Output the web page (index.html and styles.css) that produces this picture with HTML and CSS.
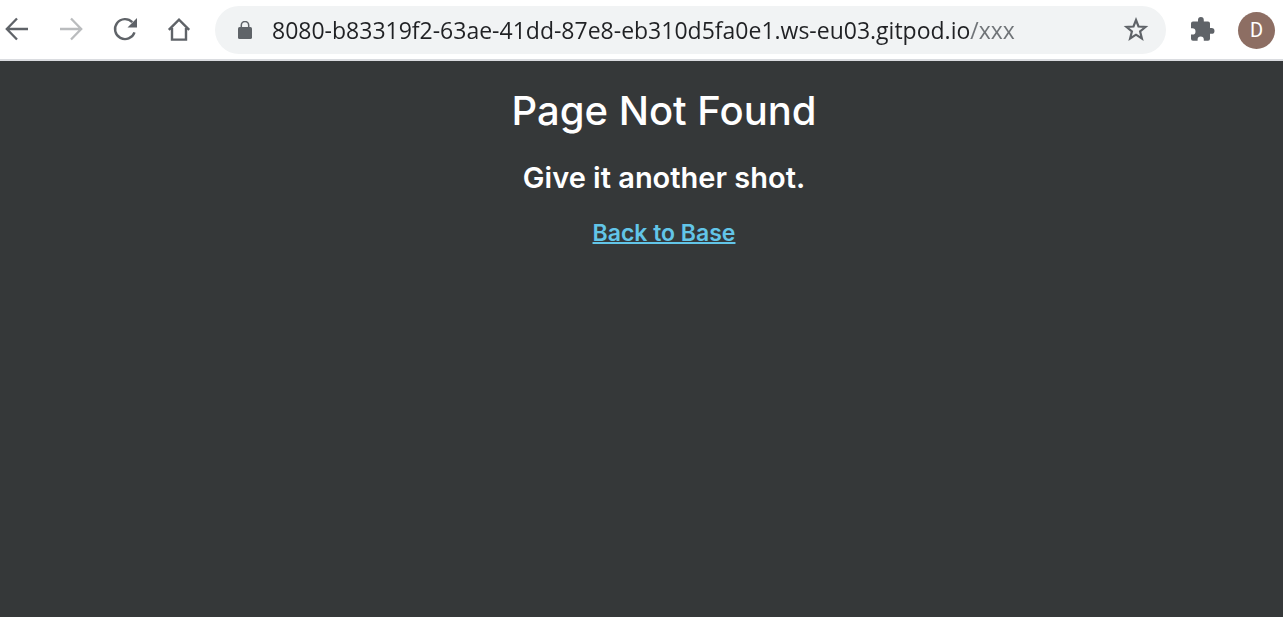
FILE: index.html
```html
<!DOCTYPE html>
<html lang="en">
<head>
<meta charset="utf-8">
<meta name="viewport" content="width=device-width, initial-scale=1">
<title>Page Not Found</title>
<link rel="stylesheet" href="styles.css">
</head>
<body>
<header class="toolbar">
  <nav class="nav-buttons" aria-label="Browser">
    <button class="icon-button" type="button" aria-label="Back">
      <svg viewBox="0 0 24 24"><path d="M23 12H2.500M12 1.500 1.800 12 12 22.500" fill="none" stroke="currentColor" stroke-width="2.300"/></svg>
    </button>
    <button class="icon-button icon-button-muted" type="button" aria-label="Forward">
      <svg viewBox="0 0 24 24"><path d="M1 12h20.500M12 1.500 22.200 12 12 22.500" fill="none" stroke="currentColor" stroke-width="2.300"/></svg>
    </button>
    <button class="icon-button" type="button" aria-label="Reload">
      <svg viewBox="0 0 24 24"><path d="M21.500 15.400A10 10 0 1 1 19.300 5.200" fill="none" stroke="currentColor" stroke-width="2.400"/><path d="M24 1v9.500h-9.500z" fill="currentColor"/></svg>
    </button>
    <button class="icon-button" type="button" aria-label="Home">
      <svg viewBox="0 0 24 24"><path d="M1.800 12.900 12 2.700l10.200 10.200M5 11v11.600h14V11" fill="none" stroke="currentColor" stroke-width="2.400"/></svg>
    </button>
  </nav>
  <form class="address">
    <svg class="lock" viewBox="0 0 14 18"><rect y="6" width="14" height="12" rx="1.600" fill="currentColor"/><path d="M3.300 7V4.200a3.700 3.700 0 0 1 7.400 0V7" fill="none" stroke="currentColor" stroke-width="1.500"/></svg>
    <input class="address-input" type="text" aria-label="Address" spellcheck="false" value="8080-b83319f2-63ae-41dd-87e8-eb310d5fa0e1.ws-eu03.gitpod.io/xxx">
    <button class="icon-button" type="button" aria-label="Bookmark">
      <svg viewBox="0 0 24 24"><path d="M12 3 14.500 9.500l7 .5-5.400 4.500 1.800 7-5.900-3.800-5.900 3.800 1.800-7L2.500 10l7-.5z" fill="none" stroke="currentColor" stroke-width="2.200"/></svg>
    </button>
  </form>
  <button class="icon-button" type="button" aria-label="Extensions">
    <svg viewBox="0 0 24 24"><path d="M3 4.600H8V3a2.900 2.900 0 0 1 5.800 0v1.600H18a2 2 0 0 1 2 2V11h1.600a2.900 2.900 0 0 1 0 5.800H20v5a2 2 0 0 1-2 2h-4.200v-1.300a3.100 3.100 0 0 0-6.200 0v1.300H3a2 2 0 0 1-2-2v-4.200h1.300a3.200 3.200 0 0 0 0-6.400H1V6.600a2 2 0 0 1 2-2z" fill="currentColor"/></svg>
  </button>
  <button class="avatar" type="button" aria-label="Profile D">D</button>
</header>
<main class="page">
  <h1 class="title">Page Not Found</h1>
  <h2 class="subtitle">Give it another shot.</h2>
  <a class="back-link" href="/">Back to Base</a>
</main>
</body>
</html>
```
FILE: styles.css
```css
* {
  box-sizing: border-box;
}

body {
  display: flex;
  flex-direction: column;
  min-height: 100vh;
  margin: 0;
  background: #353839;
  font-family: Inter, "Liberation Sans", sans-serif;
}

button {
  padding: 0;
  border: 0;
  background: none;
}

.toolbar {
  display: flex;
  align-items: center;
  gap: 24px;
  padding: 6px 8px 5px 5px;
  border-bottom: 2px solid #dadce0;
  background: #fff;
}

.nav-buttons {
  display: flex;
  gap: 30px;
}

.icon-button {
  flex: none;
  width: 24px;
  height: 24px;
  margin-bottom: 2px;
  color: #5f6368;
}

.icon-button svg {
  display: block;
  width: 100%;
  height: 100%;
  overflow: visible;
}

.icon-button-muted {
  color: #babcbe;
}

.address {
  display: flex;
  flex: 1;
  align-items: center;
  min-width: 0;
  height: 48px;
  padding: 0 18px 0 23px;
  border-radius: 24px;
  background: #f1f3f4;
}

.lock {
  flex: none;
  width: 14px;
  height: 18px;
  margin-right: 20px;
  color: #5f6368;
}

.address-input {
  flex: 1;
  min-width: 0;
  height: 48px;
  padding: 0;
  border: 0;
  outline: 0;
  background: linear-gradient(to right, #202124 699px, #6f7377 699px);
  -webkit-background-clip: text;
  background-clip: text;
  color: transparent;
  font-family: "Open Sans", "Noto Sans", sans-serif;
  font-size: 23px;
}

.avatar {
  flex: none;
  width: 37px;
  height: 37px;
  border-radius: 50%;
  background: #8d6e63;
  color: #fff;
  font-family: Roboto, sans-serif;
  font-size: 20px;
}

.page {
  display: flex;
  flex: 1;
  flex-direction: column;
  align-items: center;
  padding: 26px 0 24px 45px;
  color: #fff;
  text-align: center;
}

.title {
  margin: 0 0 24px;
  font-size: 40px;
  font-weight: 500;
  line-height: 48px;
}

.subtitle {
  margin: 0 0 20px;
  font-size: 29px;
  font-weight: 600;
  line-height: 38px;
}

.back-link {
  color: #62c5e8;
  font-size: 23px;
  font-weight: 600;
  line-height: 32px;
  text-decoration-thickness: 2px;
}
```
